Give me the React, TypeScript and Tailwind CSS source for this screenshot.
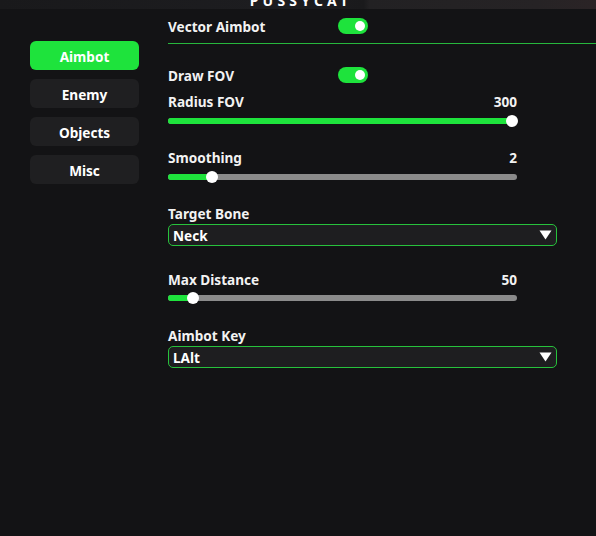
import React from "react";

const font = { fontFamily: '"Noto Sans", "DejaVu Sans", sans-serif' };

const tabs = ["Aimbot", "Enemy", "Objects", "Misc"];

function Toggle() {
  return (
    <div className="flex h-[16px] w-[30px] items-center justify-end rounded-full bg-[#1ee33c] pr-[3px]">
      <div className="h-[10px] w-[10px] rounded-full bg-white" />
    </div>
  );
}

function Slider({ pct }: { pct: number }) {
  return (
    <div className="relative flex h-[12px] w-[349px] items-center">
      <div className="h-[6px] w-full rounded-full bg-[#8b8b8b]" />
      <div className="absolute left-0 h-[6px] rounded-l-full bg-[#1ee33c]" style={{ width: `${pct}%` }} />
      <div
        className="absolute h-[12px] w-[12px] -translate-x-1/2 rounded-full bg-white"
        style={{ left: `${pct}%` }}
      />
    </div>
  );
}

function LabelRow({ label, value }: { label: string; value?: string }) {
  return (
    <div className="flex h-[16px] w-[349px] items-center justify-between pt-[2px] text-[13.6px] font-bold leading-none text-[#f2f2f2]">
      <span>{label}</span>
      {value && <span>{value}</span>}
    </div>
  );
}

function Select({ value }: { value: string }) {
  return (
    <div className="flex h-[22px] w-[389px] items-center justify-between rounded-[5px] border border-[#27c23c] bg-[#1e1e20] pl-[4px] pr-[4px] text-[13.6px] font-bold leading-none text-white">
      <span className="pt-[2px]">{value}</span>
      <svg width="13" height="10" viewBox="0 0 13 10">
        <path d="M0.5 0.5 L12.5 0.5 L6.5 9.5 Z" fill="#ffffff" />
      </svg>
    </div>
  );
}

export default function App() {
  return (
    <div className="relative h-[536px] w-[596px] overflow-hidden bg-[#131315]" style={font}>
      {/* top background strip */}
      <div className="h-[9px] w-full bg-[linear-gradient(90deg,#19191b_0%,#1d1d20_45%,#1a1a1c_61%,#222123_62%,#262325_90%,#2b2426_100%)]" />
      <div className="absolute left-0 top-[-10px] w-full pl-[6px] text-center text-[14px] font-bold tracking-[0.3em] text-white">
        PUSSYCAT
      </div>

      <div className="flex">
        {/* sidebar */}
        <div className="flex w-[139px] flex-col gap-[9px] pl-[30px] pt-[32px]">
          {tabs.map((t, i) => (
            <div
              key={t}
              className={
                "flex h-[29px] w-[109px] items-center justify-center rounded-[6px] pt-[2px] text-[13.6px] font-bold leading-none text-white " +
                (i === 0 ? "bg-[#1ee33c]" : "bg-[#1f1f21]")
              }
            >
              {t}
            </div>
          ))}
        </div>

        {/* content */}
        <div className="ml-[29px] flex flex-1 flex-col">
          <div className="flex h-[34px] items-center text-[13.6px] font-bold leading-none text-[#f2f2f2]">
            <span className="w-[170px] pt-[2px]">Vector Aimbot</span>
            <Toggle />
          </div>
          <div className="h-px w-full bg-[#27b83d]" />

          <div className="mt-[23px] flex h-[16px] items-center text-[13.6px] font-bold leading-none text-[#f2f2f2]">
            <span className="w-[170px] pt-[2px]">Draw FOV</span>
            <Toggle />
          </div>

          <div className="mt-[10px]">
            <LabelRow label="Radius FOV" value="300" />
          </div>
          <div className="mt-[6px]">
            <Slider pct={98.5} />
          </div>

          <div className="mt-[22px]">
            <LabelRow label="Smoothing" value="2" />
          </div>
          <div className="mt-[6px]">
            <Slider pct={12.6} />
          </div>

          <div className="mt-[22px]">
            <LabelRow label="Target Bone" />
          </div>
          <div className="mt-[3px]">
            <Select value="Neck" />
          </div>

          <div className="mt-[25px]">
            <LabelRow label="Max Distance" value="50" />
          </div>
          <div className="mt-[5px]">
            <Slider pct={7.2} />
          </div>

          <div className="mt-[23px]">
            <LabelRow label="Aimbot Key" />
          </div>
          <div className="mt-[3px]">
            <Select value="LAlt" />
          </div>
        </div>
      </div>
    </div>
  );
}
